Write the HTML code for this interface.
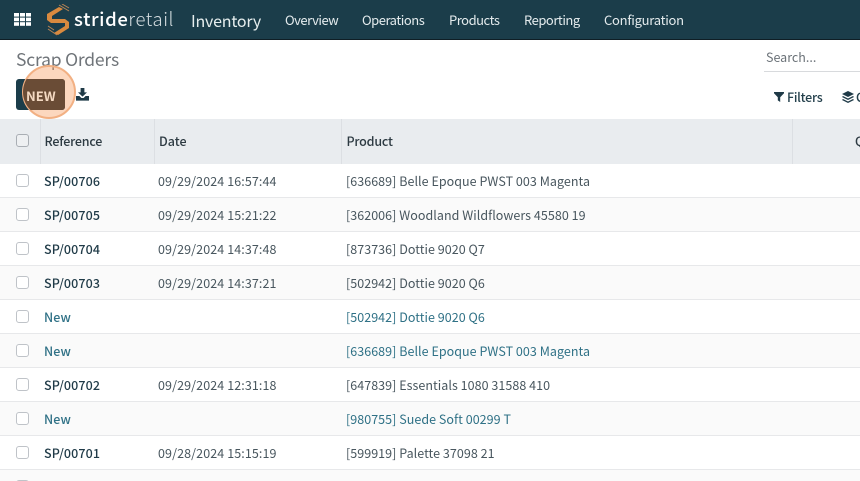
<!DOCTYPE html>
<html><head><meta charset="utf-8">
<style>
html,body{margin:0;padding:0;width:860px;height:481px;overflow:hidden;background:#fff}
body{position:relative;font-family:"Noto Sans CJK SC","Liberation Sans",sans-serif;font-size:12.5px;color:#374151}
.t{position:absolute;white-space:nowrap;line-height:18px}
.nav{position:absolute;left:0;top:0;width:860px;height:39px;background:#1b3d4a;border-bottom:1px solid #0f1e25}
.nv{color:#e4ebed;font-size:13px;top:11px;letter-spacing:-.48px}
.row{position:absolute;left:0;width:860px;height:33px;border-bottom:1px solid #e7e8ea}
.cb{position:absolute;left:16px;width:11px;height:11px;border:1px solid #bfc3c8;border-radius:3px;background:#fff}
.r{left:44px;font-weight:500;color:#1f3a47;letter-spacing:.1px}
.d{left:158px;color:#48565e;letter-spacing:.1px}
.p{left:346px;color:#48565e;letter-spacing:.04px}
.n{color:#2f7186}
.h{color:#2d3a42;font-weight:500;top:132px}
</style></head><body>
<div class="nav"></div>
<svg style="position:absolute;left:14px;top:13px" width="18" height="13" viewBox="0 0 18 13" fill="#fff"><rect x="0" y="0" width="5" height="3.6"/><rect x="6" y="0" width="5" height="3.6"/><rect x="12" y="0" width="5" height="3.6"/><rect x="0" y="4.6" width="5" height="3.6"/><rect x="6" y="4.6" width="5" height="3.6"/><rect x="12" y="4.6" width="5" height="3.6"/><rect x="0" y="9.2" width="5" height="3.6"/><rect x="6" y="9.2" width="5" height="3.6"/><rect x="12" y="9.2" width="5" height="3.6"/></svg>
<svg style="position:absolute;left:46px;top:4px" width="25" height="32" viewBox="0 0 25 32" fill="none"><path d="M1 10 L13 3 L17 5 L6 12 L6 15 L19 15 L23 18 L23 24 L12 31 L8 29 L19 22 L19 19 L5 19 L1 16Z" fill="#d98a3f"/><path d="M13 1 L23 7 M16 0 L23 4 M2 25 L11 31 M2 22 L8 26" stroke="#b98555" stroke-width="1"/><path d="M8 12 L18 12 M7 21 L16 21" stroke="#1b3d4a" stroke-width="1.2"/></svg>
<div class="t" style="left:74px;top:7px;font-size:18.5px;line-height:24px;color:#fff;font-weight:500;letter-spacing:.6px">stride<span style="font-weight:300;color:#d5dde0">retail</span></div>
<div class="t" style="left:191px;top:9px;font-size:16px;line-height:22px;color:#e6eeee;letter-spacing:-.2px">Inventory</div>
<div class="t nv" style="left:285px">Overview</div>
<div class="t nv" style="left:362px">Operations</div>
<div class="t nv" style="left:449px">Products</div>
<div class="t nv" style="left:524px">Reporting</div>
<div class="t nv" style="left:604px;letter-spacing:-.26px">Configuration</div>

<div class="t" style="left:16px;top:48px;font-size:17.5px;line-height:24px;color:#6f7479;letter-spacing:-.2px">Scrap Orders</div>
<div style="position:absolute;left:16px;top:79px;width:49px;height:31px;background:#1b3d4a;border-radius:3px"></div>
<div style="position:absolute;left:22px;top:65px;width:50px;height:50px;border-radius:50%;background:rgba(247,160,100,.42);border:2px solid #f2b083"></div>
<div style="position:absolute;left:16px;top:79px;width:49px;height:31px;background:#6a4c36;border-radius:3px;clip-path:circle(25.5px at 32.5px 13px)"></div>
<div class="t" style="left:26px;top:87px;font-size:13px;font-weight:700;color:#f4d9c2;letter-spacing:0">NEW</div>
<svg style="position:absolute;left:76px;top:88px" width="13" height="13" viewBox="0 0 13 13" fill="#1f3a47"><path d="M4.6 0H8.4V4.4H11L6.5 8.6L2 4.4H4.6Z"/><path d="M0 8H3.4L5.4 10H7.6L9.6 8H13V12.6H0Z"/></svg>

<div class="t" style="left:766px;top:48px;font-size:12.5px;color:#6b7278">Search...</div>
<div style="position:absolute;left:764px;top:71px;width:96px;height:1px;background:#d8dadd"></div>
<svg style="position:absolute;left:774px;top:92px" width="10" height="10" viewBox="0 0 10 10" fill="#1f3a47"><path d="M0 0H10V1.2L6.2 5.2V10L3.8 8.4V5.2L0 1.2Z"/></svg>
<div class="t" style="left:787px;top:88px;color:#24404c;font-weight:500;letter-spacing:-.25px">Filters</div>
<svg style="position:absolute;left:842px;top:91px" width="12" height="12" viewBox="0 0 12 12" fill="#1f3a47"><path d="M6 0L12 3L6 6L0 3Z"/><path d="M1 5L6 7.5L11 5L12 6L6 9L0 6Z"/><path d="M1 8L6 10.5L11 8L12 9L6 12L0 9Z"/></svg>
<div class="t" style="left:856px;top:88px;color:#24404c;font-weight:500">G</div>

<div style="position:absolute;left:0;top:119px;width:860px;height:45px;background:#e9ecef"></div>
<div style="position:absolute;left:40px;top:119px;width:1px;height:45px;background:#dcdfe3"></div>
<div style="position:absolute;left:154px;top:119px;width:1px;height:45px;background:#dcdfe3"></div>
<div style="position:absolute;left:341px;top:119px;width:1px;height:45px;background:#dcdfe3"></div>
<div style="position:absolute;left:792px;top:119px;width:1px;height:45px;background:#dcdfe3"></div>
<div class="cb" style="top:134px;background:#eef0f2;border-color:#a9aeb4"></div>
<div class="t h" style="left:44.5px;letter-spacing:-.2px">Reference</div>
<div class="t h" style="left:159px">Date</div>
<div class="t h" style="left:346.5px;letter-spacing:-.2px">Product</div>
<div class="t h" style="left:855px">Q</div>

<div class="row" style="top:164px"></div><div class="cb" style="top:174px"></div>
<div class="t r" style="top:172px">SP/00706</div><div class="t d" style="top:172px">09/29/2024 16:57:44</div><div class="t p" style="top:172px">[636689] Belle Epoque PWST 003 Magenta</div>

<div class="row" style="top:198px;background:#fafafa"></div><div class="cb" style="top:208px"></div>
<div class="t r" style="top:206px">SP/00705</div><div class="t d" style="top:206px">09/29/2024 15:21:22</div><div class="t p" style="top:206px">[362006] Woodland Wildflowers 45580 19</div>

<div class="row" style="top:232px"></div><div class="cb" style="top:242px"></div>
<div class="t r" style="top:240px">SP/00704</div><div class="t d" style="top:240px">09/29/2024 14:37:48</div><div class="t p" style="top:240px">[873736] Dottie 9020 Q7</div>

<div class="row" style="top:266px;background:#fafafa"></div><div class="cb" style="top:276px"></div>
<div class="t r" style="top:274px">SP/00703</div><div class="t d" style="top:274px">09/29/2024 14:37:21</div><div class="t p" style="top:274px">[502942] Dottie 9020 Q6</div>

<div class="row" style="top:300px"></div><div class="cb" style="top:310px"></div>
<div class="t r n" style="top:308px">New</div><div class="t p n" style="top:308px">[502942] Dottie 9020 Q6</div>

<div class="row" style="top:334px;background:#fafafa"></div><div class="cb" style="top:344px"></div>
<div class="t r n" style="top:342px">New</div><div class="t p n" style="top:342px">[636689] Belle Epoque PWST 003 Magenta</div>

<div class="row" style="top:368px"></div><div class="cb" style="top:378px"></div>
<div class="t r" style="top:376px">SP/00702</div><div class="t d" style="top:376px">09/29/2024 12:31:18</div><div class="t p" style="top:376px">[647839] Essentials 1080 31588 410</div>

<div class="row" style="top:402px;background:#fafafa"></div><div class="cb" style="top:412px"></div>
<div class="t r n" style="top:410px">New</div><div class="t p n" style="top:410px">[980755] Suede Soft 00299 T</div>

<div class="row" style="top:436px"></div><div class="cb" style="top:446px"></div>
<div class="t r" style="top:444px">SP/00701</div><div class="t d" style="top:444px">09/28/2024 15:15:19</div><div class="t p" style="top:444px">[599919] Palette 37098 21</div>

<div class="row" style="top:470px;background:#fafafa"></div><div class="cb" style="top:480px"></div>
</body></html>
